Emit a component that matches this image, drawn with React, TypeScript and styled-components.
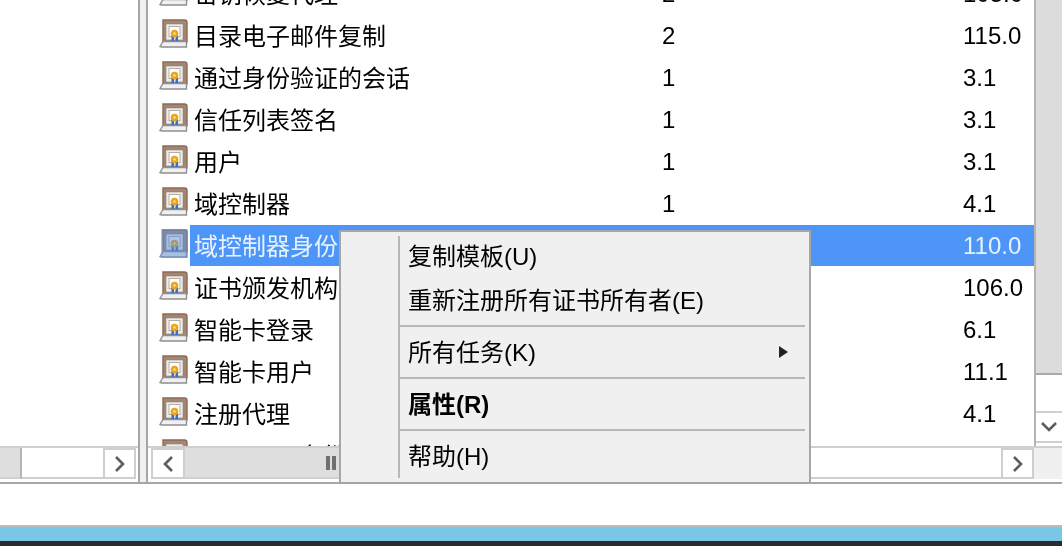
import styled, { createGlobalStyle } from "styled-components";

const GlobalStyle = createGlobalStyle`
  html, body {
    margin: 0;
    padding: 0;
    background: #ffffff;
    overflow: hidden;
  }
`;

const Page = styled.div`
  position: relative;
  display: flex;
  flex-direction: column;
  width: 1062px;
  height: 546px;
  overflow: hidden;
  font-family: "Liberation Sans", "Noto Sans CJK SC", sans-serif;
  font-size: 24px;
  color: #000000;
  filter: blur(0.5px);
`;

const Console = styled.div`
  display: flex;
  height: 484px;
  flex: none;
  background: #f0f0f0;
  border-bottom: 2px solid #a6a6a6;
  box-sizing: border-box;
`;

const LeftPane = styled.div`
  display: flex;
  flex-direction: column;
  justify-content: flex-end;
  width: 140px;
  flex: none;
  box-sizing: border-box;
  background: #ffffff;
  border-right: 2px solid #a6a6a6;
`;

const RightPane = styled.div`
  display: flex;
  flex-direction: column;
  flex: 1;
  min-width: 0;
  margin-left: 6px;
  background: #ffffff;
  border-left: 2px solid #a6a6a6;
`;

const ListArea = styled.div`
  display: flex;
  flex: 1;
  min-height: 0;
`;

const List = styled.div`
  flex: 1;
  min-width: 0;
  overflow: hidden;
  padding-left: 11px;
`;

const Rows = styled.div`
  margin-top: -27px;
`;

const Row = styled.div`
  display: flex;
  align-items: center;
  height: 42px;
  white-space: nowrap;
`;

const CertIcon = styled.svg`
  width: 29px;
  height: 29px;
  flex: none;
  margin: 0 2px 6px 0;
`;

const Cells = styled.div<{ $selected?: boolean }>`
  display: grid;
  grid-template-columns: 468px 301px 1fr;
  align-items: center;
  align-self: flex-start;
  flex: 1;
  height: 42px;
  box-sizing: border-box;
  padding-left: 4px;
  background: ${(p) => (p.$selected ? "linear-gradient(#4e95f8 41px, #ffffff 41px)" : "transparent")};
  color: ${(p) => (p.$selected ? "#e8f2ff" : "#000000")};
`;

const NameCell = styled.span`
  padding-bottom: 4px;
`;

const VScrollbar = styled.div`
  display: flex;
  flex-direction: column;
  width: 28px;
  flex: none;
  box-sizing: border-box;
  border-left: 2px solid #b4b4b4;
  background: #ffffff;
`;

const VThumb = styled.div`
  height: 375px;
  flex: none;
  box-sizing: border-box;
  background: #dcdcdc;
  border-bottom: 2px solid #a9a9a9;
`;

const VTrack = styled.div`
  flex: 1;
`;

const ScrollButton = styled.div<{ $w?: number; $h?: number }>`
  display: flex;
  align-items: center;
  justify-content: center;
  flex: none;
  box-sizing: border-box;
  width: ${(p) => (p.$w ? `${p.$w}px` : "auto")};
  height: ${(p) => (p.$h ? `${p.$h}px` : "auto")};
  background: #ffffff;
  border: 2px solid #cfcfcf;
`;

const VButton = styled(ScrollButton)`
  border-left: 0;
  border-right: 0;
  margin-bottom: 3px;
`;

const HScrollRow = styled.div`
  display: flex;
  height: 36px;
  flex: none;
  box-sizing: border-box;
  padding-bottom: 3px;
  background: #ffffff;
  border-top: 2px solid #cfcfcf;
`;

const LeftHScroll = styled(HScrollRow)`
  padding-right: 2px;
`;

const HBar = styled.div`
  display: flex;
  flex: 1;
  min-width: 0;
  margin-left: 3px;
`;

const HThumb = styled.div<{ $w: number }>`
  display: flex;
  align-items: center;
  justify-content: flex-end;
  width: ${(p) => p.$w}px;
  flex: none;
  box-sizing: border-box;
  background: #dedede;
  border-right: 2px solid #b4b4b4;
  border-bottom: 2px solid #cfcfcf;
`;

const HTrack = styled.div`
  flex: 1;
  background: #ffffff;
  border-bottom: 2px solid #cfcfcf;
`;

const Grip = styled.div`
  width: 10px;
  height: 14px;
  margin-right: 177px;
  background: repeating-linear-gradient(90deg, #6f6f6f 0 4px, transparent 4px 6px);
`;

const Corner = styled.div`
  width: 28px;
  flex: none;
  background: #f0f0f0;
`;

const WhiteStrip = styled.div`
  height: 41px;
  flex: none;
  background: #ffffff;
`;

const TaskbarEdge = styled.div`
  height: 16px;
  flex: none;
  box-sizing: border-box;
  background: #7ac6e6;
  border-top: 2px solid #bdbdbd;
`;

const Taskbar = styled.div`
  flex: 1;
  background: #2b2b2b;
`;

const Menu = styled.div`
  position: absolute;
  left: 339px;
  top: 230px;
  width: 472px;
  height: 254px;
  box-sizing: border-box;
  padding: 4px 4px 4px 57px;
  background: #f0f0f0;
  border: 2px solid #a6a6a6;
`;

const MenuColumn = styled.div`
  display: flex;
  flex-direction: column;
  height: 100%;
  border-left: 2px solid #b8b8b8;
`;

const MenuItem = styled.div<{ $bold?: boolean }>`
  display: flex;
  align-items: center;
  justify-content: space-between;
  height: 44px;
  flex: none;
  box-sizing: border-box;
  padding: 0 17px 8px 8px;
  font-weight: ${(p) => (p.$bold ? 700 : 400)};
  white-space: nowrap;
`;

const MenuSeparator = styled.div`
  height: 2px;
  margin: 1px 0 5px;
  flex: none;
  background: #b8b8b8;
`;

const SubArrow = styled.span`
  width: 0;
  height: 0;
  margin-top: 4px;
  border-left: 9px solid #222222;
  border-top: 6px solid transparent;
  border-bottom: 6px solid transparent;
`;

type Template = { name: string; schema: string; version: string; selected?: boolean };

const templates: Template[] = [
  { name: "密钥恢复代理", schema: "2", version: "105.0" },
  { name: "目录电子邮件复制", schema: "2", version: "115.0" },
  { name: "通过身份验证的会话", schema: "1", version: "3.1" },
  { name: "信任列表签名", schema: "1", version: "3.1" },
  { name: "用户", schema: "1", version: "3.1" },
  { name: "域控制器", schema: "1", version: "4.1" },
  { name: "域控制器身份验证", schema: "2", version: "110.0", selected: true },
  { name: "证书颁发机构", schema: "2", version: "106.0" },
  { name: "智能卡登录", schema: "1", version: "6.1" },
  { name: "智能卡用户", schema: "1", version: "11.1" },
  { name: "注册代理", schema: "1", version: "4.1" },
  { name: "Kerberos 身份验证", schema: "2", version: "110.0" },
];

function Certificate({ selected }: { selected?: boolean }) {
  return (
    <CertIcon viewBox="0 0 29 29">
      <path d="M4 1h21.5q2.5 0 2.5 2.5V23H4z" fill="#a98670" stroke="#8d6a54" strokeWidth="1.4" />
      <rect x="6.5" y="4.5" width="18" height="17" fill="#efece6" stroke="#8f8880" strokeWidth="1.6" />
      <rect x="10" y="7.5" width="11" height="10" fill="#ffffff" stroke="#b5ada4" />
      <path d="M1 27.5 L4 22.5 H27.5 V28 H3z" fill="#f0f0f0" stroke="#8f8f8f" strokeWidth="1.4" />
      <path d="M12.5 16h2.5v6h-2.5zM16.5 16H19v6h-2.5z" fill="#2f6fe0" />
      <circle cx="15.5" cy="14.5" r="3.8" fill="#eaa51e" />
      <circle cx="15.5" cy="14.5" r="1.3" fill="#fbe08a" />
      {selected && <rect x="2" y="0" width="27" height="29" fill="#5a8fd8" opacity="0.5" />}
    </CertIcon>
  );
}

const ChevronLeft = () => (
  <svg width="14" height="18" viewBox="0 0 14 18">
    <path d="M11 2 4 9l7 7" fill="none" stroke="#5c5c5c" strokeWidth="2.6" />
  </svg>
);

const ChevronRight = () => (
  <svg width="14" height="18" viewBox="0 0 14 18">
    <path d="M3 2l7 7-7 7" fill="none" stroke="#5c5c5c" strokeWidth="2.6" />
  </svg>
);

const ChevronDown = () => (
  <svg width="18" height="14" viewBox="0 0 18 14">
    <path d="M2 3l7 7 7-7" fill="none" stroke="#5c5c5c" strokeWidth="2.6" />
  </svg>
);

export default function App() {
  return (
    <Page>
      <GlobalStyle />
      <Console>
        <LeftPane>
          <LeftHScroll>
            <HThumb $w={22} />
            <HTrack />
            <ScrollButton $w={33}>
              <ChevronRight />
            </ScrollButton>
          </LeftHScroll>
        </LeftPane>
        <RightPane>
          <ListArea>
            <List>
              <Rows>
                {templates.map((t) => (
                  <Row key={t.name}>
                    <Certificate selected={t.selected} />
                    <Cells $selected={t.selected}>
                      <NameCell>{t.name}</NameCell>
                      <span>{t.schema}</span>
                      <span>{t.version}</span>
                    </Cells>
                  </Row>
                ))}
              </Rows>
            </List>
            <VScrollbar>
              <VThumb />
              <VTrack />
              <VButton $h={32}>
                <ChevronDown />
              </VButton>
            </VScrollbar>
          </ListArea>
          <HScrollRow>
            <HBar>
              <ScrollButton $w={34}>
                <ChevronLeft />
              </ScrollButton>
              <HThumb $w={330}>
                <Grip />
              </HThumb>
              <HTrack />
              <ScrollButton $w={33}>
                <ChevronRight />
              </ScrollButton>
            </HBar>
            <Corner />
          </HScrollRow>
        </RightPane>
      </Console>
      <WhiteStrip />
      <TaskbarEdge />
      <Taskbar />
      <Menu>
        <MenuColumn>
          <MenuItem>复制模板(U)</MenuItem>
          <MenuItem>重新注册所有证书所有者(E)</MenuItem>
          <MenuSeparator />
          <MenuItem>
            所有任务(K)
            <SubArrow />
          </MenuItem>
          <MenuSeparator />
          <MenuItem $bold>属性(R)</MenuItem>
          <MenuSeparator />
          <MenuItem>帮助(H)</MenuItem>
        </MenuColumn>
      </Menu>
    </Page>
  );
}
